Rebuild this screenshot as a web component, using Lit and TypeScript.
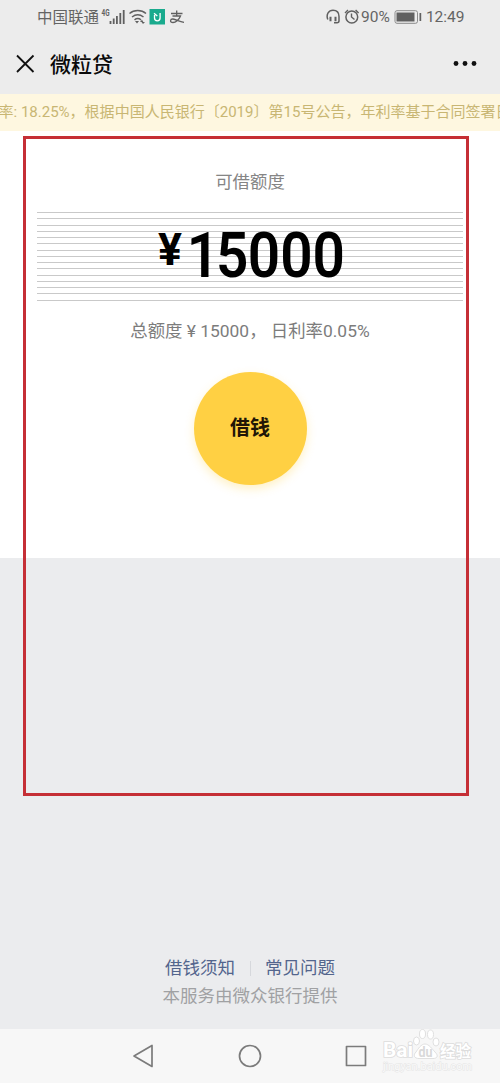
import { LitElement, html, css, svg } from "lit";
import { customElement } from "lit/decorators.js";

@customElement("app-root")
export class AppRoot extends LitElement {
  static styles = css`
    :host {
      display: flex;
      flex-direction: column;
      position: relative;
      width: 500px;
      height: 1083px;
      overflow: hidden;
      background: #ebecee;
      font-family: Roboto, "Noto Sans CJK SC", sans-serif;
      white-space: nowrap;
    }
    svg { display: block; flex: none; }
    .status {
      display: flex;
      align-items: center;
      justify-content: space-between;
      box-sizing: border-box;
      height: 34px;
      padding: 0 35.5px 0 37px;
      background: #ececec;
      color: #646464;
      font-size: 15.5px;
    }
    .group { display: flex; align-items: center; height: 34px; }
    .carrier { margin-top: -2px; }
    .header {
      display: flex;
      align-items: center;
      box-sizing: border-box;
      height: 60px;
      padding: 0 23px 0 16px;
      background: #ececec;
    }
    .title { flex: 1; margin: -2px 0 0 15px; font-size: 21px; font-weight: 500; color: #0a0a0a; }
    .notice {
      height: 37px;
      line-height: 37px;
      background: #fef7e0;
      color: #c8b673;
      font-size: 15.03px;
      overflow: hidden;
    }
    .track { margin-left: -1.5px; }
    .card {
      display: flex;
      flex-direction: column;
      align-items: center;
      height: 427px;
      background: #fff;
      color: #858585;
    }
    .label { margin-top: 38px; height: 26px; line-height: 26px; font-size: 17.4px; }
    .amount { margin-top: 17px; }
    .summary { margin-top: 16px; height: 26px; line-height: 26px; font-size: 17.4px; color: #7c7c7c; white-space: pre; }
    .borrow {
      display: flex;
      align-items: center;
      justify-content: center;
      width: 113px;
      height: 113px;
      margin-top: 28px;
      padding: 0 0 2px;
      border: 0;
      border-radius: 50%;
      background: #ffd043;
      box-shadow: 0 4px 10px rgba(255, 208, 67, 0.3);
      font: 700 20px/30px Roboto, "Noto Sans CJK SC", sans-serif;
      color: #211607;
      box-sizing: border-box;
    }
    .footer {
      display: flex;
      flex: 1;
      flex-direction: column;
      justify-content: flex-end;
      align-items: center;
      padding-bottom: 19px;
      font-size: 17.5px;
      line-height: 28px;
      color: #a0a1a3;
    }
    .links { display: flex; align-items: center; color: #53658d; }
    .divider { width: 1px; height: 15px; margin: 0 14px 0 15px; background: #d6d8dc; }
    .nav { height: 54px; background: #f7f7f7; }
    .frame {
      position: absolute;
      left: 23px;
      top: 136px;
      box-sizing: border-box;
      width: 446px;
      height: 660px;
      border: 3px solid #c52f36;
      pointer-events: none;
    }
  `;

  private lines = Array.from({ length: 15 }, (_, i) => 0.5 + Math.round(i * 6.25));

  render() {
    return html`
      <div class="status">
        <div class="group">
          <span class="carrier">中国联通</span>
          <svg width="88" height="34" viewBox="0 0 88 34" fill="none" stroke="#606060">
            <text x="2.500" y="16" font-size="8.5" font-weight="700" fill="#606060" stroke="none" textLength="8" lengthAdjust="spacingAndGlyphs">4G</text>
            <path d="M11.500 21v3M14.700 18.500v5.500M17.900 16v8M21.300 13v11M24.700 10v14" stroke-width="1.8"/>
            <path d="M30.500 13.500c4.500-4 12-4 16.500 0M33 17c3.500-2.800 8-2.800 11.500 0M35.500 19.800c2-1.500 4.500-1.500 6.500 0" stroke-width="1.5"/>
            <path d="M36 21l2 2.500 2-2.500zM41 22l2-2.200 1.300 2.200zM42.500 22h3.500l-2 2z" fill="#606060" stroke="none"/>
            <rect x="50.500" y="9" width="15.500" height="15.500" fill="#19aa8d" stroke="none"/>
            <path d="M55.500 15v3q0 2.800 2.800 2.800t2.800-2.800V13M55 13.300l3.300 2.700" stroke="#fff" stroke-width="1.3"/>
            <path d="M72 13.500h11.500M77.700 10.500v5M73.500 16h8c-1.500 4-5 6.500-7.500 6.500-3.500 0-3-3.700 0-3.500 3.500.4 6 3 11 3.300" stroke-width="1.3"/>
          </svg>
        </div>
        <div class="group">
          <svg width="35" height="34" viewBox="0 0 35 34" fill="none" stroke="#606060" stroke-width="1.5">
            <path d="M1.800 19.500c-2-5.500 1-9.300 5.200-9.300s6 3 6 6.300v4.200q0 2-2 2H8"/>
            <path d="M4.500 16.800v4.500M9.500 16.800v4.500" stroke-width="2"/>
            <circle cx="25.800" cy="17" r="5.900"/>
            <path d="M25.500 13.500V17l3 2.500M19 13l3-3M29.600 10l3 3" stroke-width="1.4"/>
          </svg>
          <span>90%</span>
          <svg width="36" height="34" viewBox="0 0 36 34">
            <rect x="5" y="10.700" width="22.500" height="12.600" rx="2" fill="none" stroke="#8a8a8a" stroke-width="1"/>
            <rect x="6.500" y="12.500" width="18" height="9" fill="#606060"/>
            <rect x="29.500" y="13" width="1.700" height="8" fill="#606060"/>
          </svg>
          <span>12:49</span>
        </div>
      </div>
      <div class="header">
        <svg width="19" height="20" viewBox="0 0 19 20" stroke="#111" stroke-width="1.8"><path d="M1 1.500L17.500 18M17.500 1.500L1 18"/></svg>
        <div class="title">微粒贷</div>
        <svg width="24" height="6" viewBox="0 0 24 6" fill="#111"><circle cx="3" cy="2.500" r="2.400"/><circle cx="12" cy="2.500" r="2.400"/><circle cx="21" cy="2.500" r="2.400"/></svg>
      </div>
      <div class="notice"><div class="track">率: 18.25%，根据中国人民银行〔2019〕第15号公告，年利率基于合同签署日</div></div>
      <div class="card">
        <div class="label">可借额度</div>
        <svg class="amount" width="426" height="90" viewBox="0 0 426 90">
          ${this.lines.map((y) => svg`<path d="M0 ${y}H426" stroke="#c9c9c9"/>`)}
          <text x="121" y="52.500" font-size="44" font-weight="700" textLength="24" lengthAdjust="spacingAndGlyphs">¥</text>
          <text transform="scale(.9 1)" x="184.4 216.900 252.200 288.200 324.200" y="65" font-size="63" font-weight="600" text-anchor="middle">15000</text>
        </svg>
        <div class="summary">总额度 ¥ 15000， 日利率0.05%</div>
        <button class="borrow">借钱</button>
      </div>
      <div class="footer">
        <div class="links"><span>借钱须知</span><span class="divider"></span><span>常见问题</span></div>
        <div>本服务由微众银行提供</div>
      </div>
      <svg class="nav" width="500" height="54" viewBox="0 0 500 54" fill="none">
        <g stroke="#7b7b7b" stroke-width="1.7" stroke-linejoin="round">
          <path d="M152 16.500v21L134 27z"/><circle cx="250" cy="27" r="10.500"/><path d="M346.500 17.500h19v19h-19z"/>
        </g>
        <g fill="#fff" stroke="#dcdcdc" stroke-width=".9">
          <g font-weight="700" paint-order="stroke">
            <text x="383" y="28" font-size="19.500" textLength="30" lengthAdjust="spacingAndGlyphs" stroke-width="1.600">Bai</text>
            <text x="440" y="27.500" font-size="16" textLength="31" lengthAdjust="spacingAndGlyphs" stroke-width="1.600">经验</text>
            <text x="383" y="40.500" font-size="10.500" font-weight="400" textLength="89" lengthAdjust="spacingAndGlyphs" fill="#fafafa" stroke="#e4e4e4">jingyan.baidu.com</text>
          </g>
          <path d="M416 23c2-3 5-8 9-8s7 5 10 8c4 4 2 6.500-2 6.500h-14c-5 0-6-3.500-3-6.500z"/>
          <ellipse cx="416.500" cy="12" rx="3" ry="4"/><ellipse cx="422.500" cy="5" rx="3" ry="4.500"/><ellipse cx="430.500" cy="5.500" rx="3" ry="4.500"/><ellipse cx="436" cy="13" rx="3" ry="4"/>
          <text x="418.500" y="27.500" font-size="14" font-weight="700" textLength="14" lengthAdjust="spacingAndGlyphs" fill="#d9d9d9" stroke="none">du</text>
        </g>
      </svg>
      <div class="frame"></div>
    `;
  }
}
